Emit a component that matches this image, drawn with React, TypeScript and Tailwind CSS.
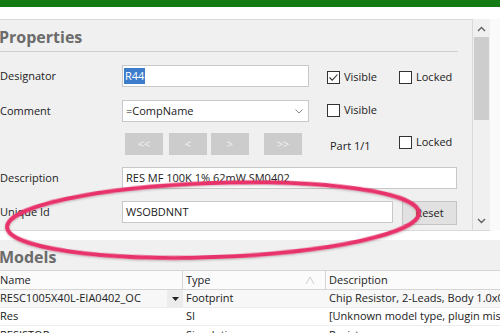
import React from "react";

const font = { fontFamily: '"Open Sans", "Noto Sans", sans-serif' };

function CheckBox({ checked, label }: { checked?: boolean; label: string }) {
  return (
    <div className="flex items-center gap-[4px]">
      <div className="w-[13px] h-[13px] border border-[#333] bg-white flex items-center justify-center">
        {checked && (
          <svg width="11" height="11" viewBox="0 0 11 11">
            <path d="M1.5 5.5 L4.2 8.2 L9.5 2.5" fill="none" stroke="#333" strokeWidth="1.1" />
          </svg>
        )}
      </div>
      <span className="text-[11px] text-[#222]">{label}</span>
    </div>
  );
}

function NavBtn({ text, left }: { text: string; left: string }) {
  return (
    <div className={`absolute top-0 h-[22px] w-[38px] bg-[#cccccc] text-[#f2f2f2] text-[11px] flex items-center justify-center ${left}`}>
      {text}
    </div>
  );
}

export default function App() {
  return (
    <div className="w-[500px] h-[333px] overflow-hidden relative bg-white" style={font}>
      {/* title bar strip */}
      <div className="h-[7px] bg-[#137a14]" />
      <div className="h-[12px] bg-white" />

      {/* Properties panel */}
      <div className="flex h-[212px]">
        <div className="w-[473px] border-t border-r border-b border-[#d9d9d9] bg-[#f0f0f0] relative">
          <div className="h-[31px] flex items-center pt-[3px]">
            <span className="text-[16px] font-bold text-[#6b6b6b] leading-[20px] -ml-[1px]">Properties</span>
          </div>
          <div className="w-[458px] h-px bg-[#cfcfcf]" />

          {/* Designator */}
          <div className="mt-[13px] h-[22px] flex items-center relative">
            <span className="w-[122px] shrink-0 text-[11px] text-[#222]">Designator</span>
            <div className="w-[187px] h-[22px] border border-[#c8c8c8] bg-white flex items-center pl-[1px]">
              <span className="bg-[#3d7ccb] text-white text-[11px] leading-[16px] px-[1px]">R44</span>
            </div>
            <div className="absolute left-[327px] top-[4px]"><CheckBox checked label="Visible" /></div>
            <div className="absolute left-[399px] top-[4px]"><CheckBox label="Locked" /></div>
          </div>

          {/* Comment */}
          <div className="mt-[13px] h-[22px] flex items-center relative">
            <span className="w-[122px] shrink-0 text-[11px] text-[#222]">Comment</span>
            <div className="w-[187px] h-[22px] border border-[#c8c8c8] bg-white flex items-center justify-between pl-[3px] pr-[5px]">
              <span className="text-[11px] text-[#222]">=CompName</span>
              <svg width="8" height="5" viewBox="0 0 8 5">
                <path d="M0.5 0.5 L4 4 L7.5 0.5" fill="none" stroke="#888" strokeWidth="1" />
              </svg>
            </div>
            <div className="absolute left-[327px] top-[2px]"><CheckBox label="Visible" /></div>
          </div>

          {/* part buttons */}
          <div className="mt-[11px] h-[22px] relative">
            <NavBtn text="<<" left="left-[125px]" />
            <NavBtn text="<" left="left-[169px]" />
            <NavBtn text=">" left="left-[211px]" />
            <NavBtn text=">>" left="left-[264px]" />
            <span className="absolute left-[330px] top-[5px] text-[11px] text-[#222]">Part 1/1</span>
            <div className="absolute left-[399px] top-[1px]"><CheckBox label="Locked" /></div>
          </div>

          {/* Description */}
          <div className="mt-[12px] h-[22px] flex items-center">
            <span className="w-[122px] shrink-0 text-[11px] text-[#222]">Description</span>
            <div className="w-[335px] h-[22px] border border-[#c8c8c8] bg-white flex items-center pl-[3px]">
              <span className="text-[11px] text-[#222]">RES MF 100K 1% 62mW SM0402</span>
            </div>
          </div>

          {/* Unique Id */}
          <div className="mt-[12px] h-[22px] flex items-center">
            <span className="w-[122px] shrink-0 text-[11px] text-[#222]">Unique Id</span>
            <div className="w-[271px] h-[22px] border border-[#c8c8c8] bg-white flex items-center pl-[3px]">
              <span className="text-[11px] text-[#222]">WSOBDNNT</span>
            </div>
            <div className="ml-[9px] w-[55px] h-[24px] mt-[2px] border border-[#c4c4c4] bg-[#e1e1e1] flex items-center justify-center text-[11px] text-[#222]">
              Reset
            </div>
          </div>
        </div>

        {/* scrollbar */}
        <div className="w-[17px] bg-[#f0f0f0] border-b border-[#d9d9d9] flex flex-col items-center">
          <svg className="mt-[7px]" width="9" height="6" viewBox="0 0 9 6">
            <path d="M1 5 L4.5 1.5 L8 5" fill="none" stroke="#606060" strokeWidth="1.4" />
          </svg>
          <div className="mt-[5px] w-[15px] h-[83px] bg-[#cdcdcd]" />
          <div className="flex-1" />
          <svg className="mb-[6px]" width="9" height="6" viewBox="0 0 9 6">
            <path d="M1 1 L4.5 4.5 L8 1" fill="none" stroke="#606060" strokeWidth="1.4" />
          </svg>
        </div>
        <div className="flex-1 bg-[#fafafa]" />
      </div>

      <div className="h-[9px] bg-white" />

      {/* Models */}
      <div className="bg-[#f0f0f0] h-[93px]">
        <div className="h-[30px] flex items-center pt-[3px]">
          <span className="text-[16px] font-bold text-[#6b6b6b] leading-[20px] -ml-[1px]">Models</span>
        </div>
        <div className="border-t border-[#d5d5d5] bg-white text-[11px] text-[#222] whitespace-nowrap">
          <div className="flex h-[19px] items-center border-b border-[#d5d5d5] bg-[#fbfbfb]">
            <div className="w-[183px] shrink-0 border-r border-[#d5d5d5] h-full flex items-center">Name</div>
            <div className="w-[143px] shrink-0 border-r border-[#d5d5d5] h-full flex items-center justify-between pl-[3px] pr-[10px]">
              <span>Type</span>
              <svg width="10" height="10" viewBox="0 0 10 10">
                <path d="M1 9 L5 2 L9 9" fill="none" stroke="#c8c8c8" strokeWidth="0.9" />
              </svg>
            </div>
            <div className="pl-[3px]">Description</div>
          </div>
          <div className="flex h-[18px] items-center border-b border-[#ececec] bg-[#f7f7f7]">
            <div className="w-[183px] shrink-0 h-full flex items-center justify-between">
              <span>RESC1005X40L-EIA0402_OC</span>
              <div className="w-[16px] h-full bg-[#ececec] flex items-center justify-center">
                <svg width="7" height="4" viewBox="0 0 7 4"><path d="M0 0 L7 0 L3.5 4 Z" fill="#222" /></svg>
              </div>
            </div>
            <div className="w-[143px] shrink-0 pl-[3px]">Footprint</div>
            <div className="pl-[3px]">Chip Resistor, 2-Leads, Body 1.0x0.5mm</div>
          </div>
          <div className="flex h-[18px] items-center border-b border-[#ececec]">
            <div className="w-[183px] shrink-0">Res</div>
            <div className="w-[143px] shrink-0 pl-[3px]">SI</div>
            <div className="pl-[3px]">[Unknown model type, plugin missing]</div>
          </div>
          <div className="flex h-[18px] items-center">
            <div className="w-[183px] shrink-0">RESISTOR</div>
            <div className="w-[143px] shrink-0 pl-[3px]">Simulation</div>
            <div className="pl-[3px]">Resistor</div>
          </div>
        </div>
      </div>

      {/* hand-drawn annotation */}
      <svg className="absolute left-0 top-0 pointer-events-none" width="500" height="333" viewBox="0 0 500 333">
        <defs>
          <filter id="sh" x="-10%" y="-50%" width="120%" height="200%">
            <feDropShadow dx="0" dy="1" stdDeviation="1.2" floodColor="#000" floodOpacity="0.25" />
          </filter>
        </defs>
        <ellipse cx="213" cy="220" rx="206" ry="37" transform="rotate(-2 213 220)" fill="none" stroke="#e8336b" strokeWidth="4" filter="url(#sh)" />
      </svg>
    </div>
  );
}
